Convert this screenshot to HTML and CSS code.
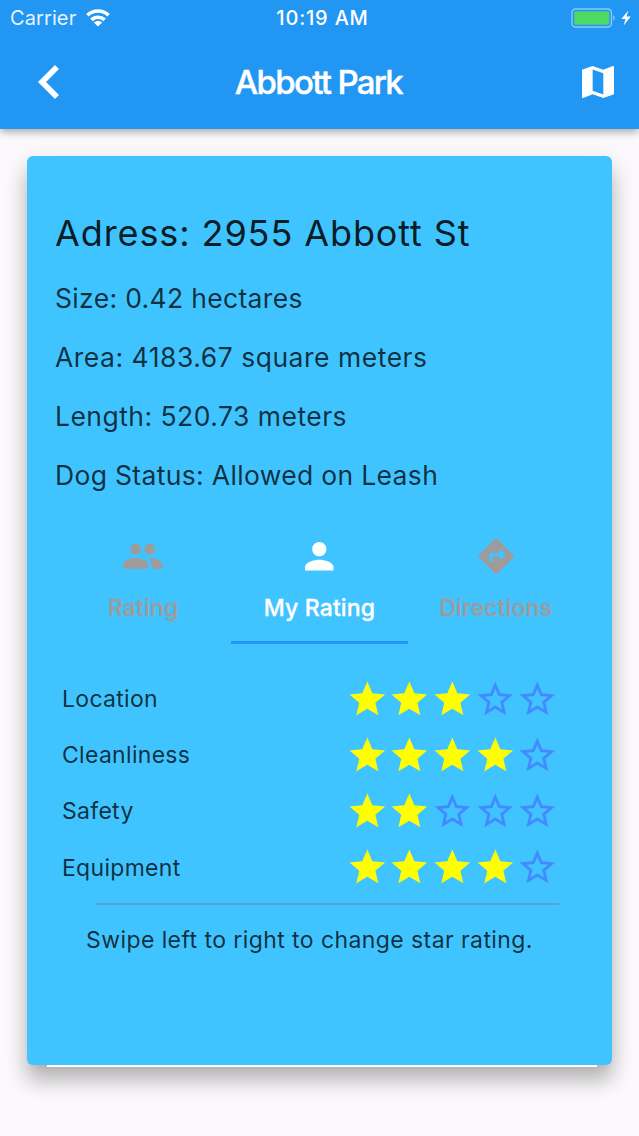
FILE: index.html
```html
<!DOCTYPE html>
<html lang="en">
<head>
<meta charset="utf-8">
<title>Abbott Park</title>
<link rel="stylesheet" href="styles.css">
</head>
<body>
<svg class="defs" aria-hidden="true">
  <symbol id="star" viewBox="0 0 24 24"><path d="M12 17.27L18.18 21l-1.64-7.03L22 9.24l-7.19-.61L12 2 9.19 8.63 2 9.24l5.46 4.73L5.82 21z"/></symbol>
  <symbol id="star-empty" viewBox="0 0 24 24"><path d="M22 9.24l-7.19-.62L12 2 9.19 8.63 2 9.24l5.46 4.73L5.82 21 12 17.27 18.18 21l-1.63-7.03L22 9.24zM12 15.4l-3.76 2.27 1-4.28-3.32-2.88 4.38-.38L12 6.1l1.71 4.04 4.38.38-3.32 2.88 1 4.28L12 15.4z"/></symbol>
</svg>
<header class="header">
  <div class="status">
    <div class="status-left">
      <span class="carrier">Carrier</span>
      <svg class="wifi" viewBox="0 0 24 18" fill="none" stroke="#fff" stroke-width="3.6"><path d="M1.4 6.3C7.3.6 16.7.6 22.6 6.3M5.4 10.9c3.7-3.5 9.5-3.5 13.2 0"/><path d="M12 17.6l-4.2-4.1c2.3-2 6.1-2 8.4 0z" fill="#fff" stroke="none"/></svg>
    </div>
    <span class="time">10:19 AM</span>
    <div class="status-right">
      <svg class="battery" viewBox="0 0 45 20"><rect x="1" y="1" width="39.4" height="18" rx="3.5" fill="none" stroke="#8dc8fa" stroke-width="1.4"/><rect x="3.2" y="3.2" width="35" height="13.6" rx="1.2" fill="#4cd964"/><path d="M42.2 7.2c2 .8 2 4.8 0 5.6z" fill="#8dc8fa"/></svg>
      <svg class="bolt" viewBox="0 0 10 16"><path d="M7.2.5L.4 9h4.1l-1.8 6.5L9.7 6.6H5.5z" fill="#fff"/></svg>
    </div>
  </div>
  <div class="appbar">
    <svg class="back" viewBox="8 6 7.41 12"><path d="M15.41 7.41L14 6l-6 6 6 6 1.41-1.41L10.83 12z" fill="#fff"/></svg>
    <h1 class="title">Abbott Park</h1>
    <svg class="map" viewBox="3 3 18 18"><path d="M20.5 3l-.16.03L15 5.1 9 3 3.36 4.9c-.21.07-.36.25-.36.48V20.5c0 .28.22.5.5.5l.16-.03L9 18.9l6 2.1 5.64-1.9c.21-.07.36-.25.36-.48V3.5c0-.28-.22-.5-.5-.5zM15 19l-6-2.11V5l6 2.11V19z" fill="#fff"/></svg>
  </div>
</header>
<main class="card">
  <h2 class="address">Adress: 2955 Abbott St</h2>
  <div class="details">
    <p class="size">Size: 0.42 hectares</p>
    <p class="area">Area: 4183.67 square meters</p>
    <p class="length">Length: 520.73 meters</p>
    <p class="dog">Dog Status: Allowed on Leash</p>
  </div>
  <nav class="tabs">
    <div class="tab">
      <svg class="icon" viewBox="0.3 0 24 24"><path d="M16 11c1.66 0 2.99-1.34 2.99-3S17.66 5 16 5c-1.66 0-3 1.34-3 3s1.34 3 3 3zm-8 0c1.66 0 2.99-1.34 2.99-3S9.66 5 8 5C6.34 5 5 6.34 5 8s1.34 3 3 3zm0 2c-2.33 0-7 1.17-7 3.5V19h14v-2.5c0-2.33-4.67-3.5-7-3.5zm8 0c-.29 0-.62.02-.97.05 1.16.84 1.97 1.97 1.97 3.45V19h6v-2.5c0-2.33-4.67-3.5-7-3.5z"/></svg>
      <span class="tab-rating">Rating</span>
    </div>
    <div class="tab active">
      <svg class="icon" viewBox="0 0 24 24"><path d="M12 12c2.21 0 4-1.79 4-4s-1.79-4-4-4-4 1.79-4 4 1.79 4 4 4zm0 2c-2.67 0-8 1.34-8 4v2h16v-2c0-2.66-5.33-4-8-4z"/></svg>
      <span class="tab-mine">My Rating</span>
    </div>
    <div class="tab">
      <svg class="icon" viewBox="0 0 24 24"><path d="M21.71 11.29l-9-9c-.39-.39-1.02-.39-1.41 0l-9 9c-.39.39-.39 1.02 0 1.41l9 9c.39.39 1.02.39 1.41 0l9-9c.39-.38.39-1.01 0-1.41zM14 14.5V12h-4v3H8v-4c0-.55.45-1 1-1h5V7.5l3.5 3.5-3.5 3.5z"/></svg>
      <span class="tab-directions">Directions</span>
    </div>
  </nav>
  <section class="ratings">
    <div class="row"><span class="r-location">Location</span><div class="stars"><svg><use href="#star"/></svg><svg><use href="#star"/></svg><svg><use href="#star"/></svg><svg class="off"><use href="#star-empty"/></svg><svg class="off"><use href="#star-empty"/></svg></div></div>
    <div class="row"><span class="r-clean">Cleanliness</span><div class="stars"><svg><use href="#star"/></svg><svg><use href="#star"/></svg><svg><use href="#star"/></svg><svg><use href="#star"/></svg><svg class="off"><use href="#star-empty"/></svg></div></div>
    <div class="row"><span class="r-safety">Safety</span><div class="stars"><svg><use href="#star"/></svg><svg><use href="#star"/></svg><svg class="off"><use href="#star-empty"/></svg><svg class="off"><use href="#star-empty"/></svg><svg class="off"><use href="#star-empty"/></svg></div></div>
    <div class="row"><span class="r-equipment">Equipment</span><div class="stars"><svg><use href="#star"/></svg><svg><use href="#star"/></svg><svg><use href="#star"/></svg><svg><use href="#star"/></svg><svg class="off"><use href="#star-empty"/></svg></div></div>
  </section>
  <div class="divider"></div>
  <p class="hint">Swipe left to right to change star rating.</p>
</main>
<div class="card-edge"></div>
</body>
</html>
```
FILE: styles.css
```css
* { box-sizing: border-box; margin: 0; padding: 0; }
body {
  width: 639px;
  height: 1136px;
  overflow: hidden;
  background: #fbf9fb;
  font-family: Inter, "Liberation Sans", sans-serif;
  color: rgba(0, 0, 0, .77);
  display: flex;
  flex-direction: column;
}
svg { display: block; flex: none; }
span, h1, h2, p { white-space: nowrap; }
.defs { width: 0; height: 0; position: absolute; }

.header {
  height: 129px;
  flex: none;
  background: #2196f3;
  color: #fff;
  box-shadow: 0 3px 8px rgba(0, 0, 0, .32);
}
.status {
  height: 35px;
  padding: 0 8px 0 10px;
  display: grid;
  grid-template-columns: 1fr auto 1fr;
  align-items: center;
  font-size: 20px;
}
.status-left { display: flex; align-items: center; gap: 10px; }
.carrier { letter-spacing: .1px; color: #e6f4ff; }
.wifi { width: 24px; height: 18px; }
.time { font-weight: 500; letter-spacing: .8px; padding-left: 4px; }
.status-right { display: flex; justify-content: flex-end; align-items: center; gap: 5px; }
.battery { width: 45px; height: 20px; }
.bolt { width: 10px; height: 16px; }
.appbar {
  height: 94px;
  padding: 0 25px 0 38px;
  display: flex;
  align-items: center;
  justify-content: space-between;
}
.back { width: 21px; height: 34px; }
.title { font-size: 33px; font-weight: 500; letter-spacing: -1.7px; margin-right: 4px; -webkit-text-stroke: .4px #fff; }
.map { width: 32px; height: 32px; }

.card {
  width: 585px;
  height: 909px;
  flex: none;
  margin: 27px 0 0 27px;
  padding: 55px 28px 0;
  border-radius: 6px;
  background: #40c4ff;
  box-shadow: 0 17px 20px rgba(0, 0, 0, .2), 0 8px 26px 2px rgba(0, 0, 0, .1), 0 8px 10px -5px rgba(0, 0, 0, .06);
}
.address { height: 44px; line-height: 44px; font-size: 36px; font-weight: 400; letter-spacing: .9px; color: rgba(0, 0, 0, .87); }
.details { margin-top: 14px; font-size: 26.5px; letter-spacing: .33px; }
.details p { height: 59px; line-height: 59px; }
.details .area { letter-spacing: .52px; }
.details .length { letter-spacing: .47px; }
.details .dog { letter-spacing: .33px; }
.tabs { display: flex; margin-top: 20px; width: 529px; height: 119px; }
.tab {
  flex: 1;
  display: flex;
  flex-direction: column;
  align-items: center;
  padding-top: 10px;
  color: #9f9b9b;
  fill: #9f9b9b;
  font-size: 23px;
  font-weight: 500;
  -webkit-text-stroke: .3px currentColor;
  letter-spacing: .15px;
  border-bottom: 3px solid transparent;
}
.active { color: #fff; fill: #fff; border-color: #2196f3; }
.icon { width: 42.6px; height: 42.6px; stroke: none; }
.tab span { line-height: 30px; margin-top: 15px; }
.ratings { margin-top: 27px; padding: 0 25px 0 7px; font-size: 23px; letter-spacing: .3px; }
.row { height: 56.2px; display: flex; align-items: center; justify-content: space-between; }
.stars { display: flex; fill: #ff0; }
.stars svg { width: 42.65px; height: 42.65px; }
.stars .off { fill: #448aff; }
.divider { height: 2px; margin: 7px 25px 0 41px; background: #5ba3cc; }
.hint { margin-top: 20px; padding-left: 31px; line-height: 30px; font-size: 23px; letter-spacing: .42px; }
.card-edge { width: 550px; height: 2px; margin-left: 47px; flex: none; background: #fff; z-index: 1; }
```
